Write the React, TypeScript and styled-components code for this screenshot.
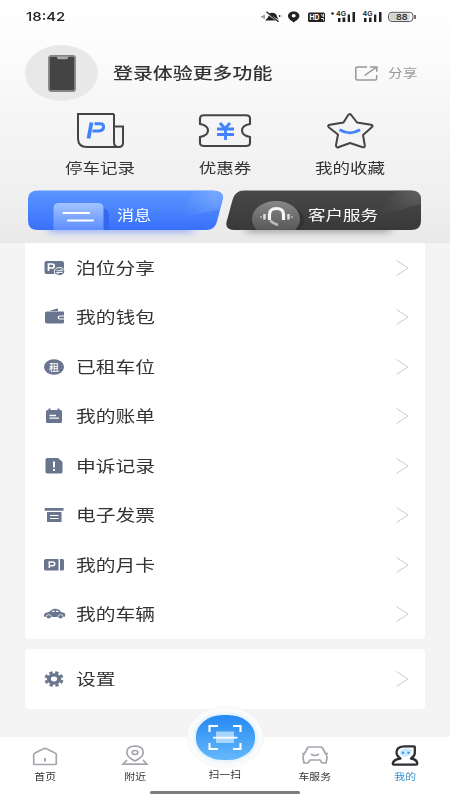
import React from "react";
import styled, { createGlobalStyle } from "styled-components";

const GlobalStyle = createGlobalStyle`
  * { box-sizing: border-box; }
  body { margin: 0; background: #f4f4f4; font-family: "Noto Sans CJK SC", sans-serif; }
  svg { display: block; flex: none; overflow: visible; }
`;

const Screen = styled.div`
  width: 450px;
  height: 800px;
  display: flex;
  flex-direction: column;
  overflow: hidden;
  background: #f4f4f4;
`;

const Header = styled.header`
  height: 243px;
  flex: none;
  background: linear-gradient(180deg, #ffffff 0%, #fcfcfc 20%, #f5f5f5 50%, #f0f0f0 80%, #e9e9e9 100%);
`;

/* Wide lettering: glyphs are stretched horizontally from the given side. */
const Label = styled.span<{ $size: number; $wide?: number; $color?: string; $from?: string; $weight?: number }>`
  display: inline-block;
  white-space: nowrap;
  line-height: 1;
  font-size: ${(p) => p.$size}px;
  font-weight: ${(p) => p.$weight ?? 400};
  color: ${(p) => p.$color ?? "#333"};
  transform: scaleX(${(p) => p.$wide ?? 1.26});
  transform-origin: ${(p) => p.$from ?? "left"} center;
`;

const StatusBar = styled.div`
  height: 34px;
  padding: 0 34px 0 26px;
  display: flex;
  align-items: center;
  justify-content: space-between;
`;

const Clock = styled(Label)`
  font-family: Inter, sans-serif;
  padding-top: 1px;
`;

const Profile = styled.div`
  height: 79px;
  padding: 0 33px 1px 25px;
  display: flex;
  align-items: center;
`;

const Avatar = styled.div`
  width: 73px;
  height: 56px;
  border-radius: 50%;
  background: #e8e8e8;
  display: flex;
  align-items: center;
  justify-content: center;
  margin-right: 15px;
`;

const Share = styled.div`
  margin-left: auto;
  display: flex;
  align-items: center;
  gap: 10px;
  width: 62px;
`;

const Shortcuts = styled.div`
  height: 77px;
  padding: 0 37px;
  display: grid;
  grid-template-columns: repeat(3, 125px);
`;

const Shortcut = styled.div`
  display: flex;
  flex-direction: column;
  align-items: center;
  gap: 12px;
`;

const Banners = styled.div`
  display: flex;
  gap: 3px;
  padding: 0 28px;
`;

const Banner = styled.div<{ $dark?: boolean }>`
  position: relative;
  width: 195px;
  height: 40px;
  display: flex;
  align-items: center;
  padding: 7px 0 0 ${(p) => (p.$dark ? 82 : 88.5)}px;
`;

const BannerArt = styled.svg`
  position: absolute;
  inset: 0;
`;

const BannerLabel = styled(Label)`
  position: relative;
`;

const Card = styled.section<{ $gap?: number }>`
  width: 400px;
  margin: ${(p) => p.$gap ?? 0}px auto 0;
  background: #fff;
  border-radius: ${(p) => (p.$gap ? "4px" : "0 0 4px 4px")};
`;

const Row = styled.div<{ $height: number }>`
  height: ${(p) => p.$height}px;
  padding: 0 16px 0 18.700px;
  display: flex;
  align-items: center;
`;

const RowIcon = styled.div`
  width: 32.800px;
`;

const RowArrow = styled.svg`
  margin-left: auto;
`;

const TabBar = styled.nav`
  height: 63px;
  margin-top: auto;
  position: relative;
  background: #fff;
  display: grid;
  grid-template-columns: repeat(5, 90px);
`;

const Tab = styled.div`
  display: flex;
  flex-direction: column;
  align-items: center;
  padding-top: 7.500px;
  gap: 5.500px;
`;

const ScanTab = styled.div`
  display: flex;
  flex-direction: column;
  align-items: center;
  margin-top: -30px;
  gap: 2.500px;
`;

const ScanHalo = styled.div`
  width: 76px;
  height: 60px;
  border-radius: 50%;
  background: #fbfbfb;
  box-shadow: 0 0 2px #e6eaee;
  display: flex;
  align-items: center;
  justify-content: center;
`;

const ScanButton = styled.div`
  width: 59px;
  height: 45px;
  border-radius: 27px / 21px;
  background: linear-gradient(180deg, #2588f2, #65b9fb);
  box-shadow: 0 0 3px 2px #dff2fc;
  display: flex;
  align-items: center;
  justify-content: center;
`;

const HomeIndicator = styled.div`
  position: absolute;
  left: 150px;
  bottom: 6.5px;
  width: 150px;
  height: 3px;
  border-radius: 2px;
  background: #7d7d7d;
`;

const StatusIcons = () => (
  <svg width="155" height="14" viewBox="261 10 155 14" fill="#222">
    <path d="M266 19.500c2-1.200 2-2.500 2.700-4l7 5H265zM269 14c2-2.200 6-1.500 7.500 1 .8 1.500.8 3 2.300 4.800z" />
    <path d="M266.500 11.800L278.500 21.800" stroke="#222" strokeWidth="1.300" />
    <path d="M262 16v1.500M264 15v3.500M279.500 15v2M281 15.500v1" stroke="#222" strokeWidth=".9" />
    <path fillRule="evenodd" d="M293.700 11.500c-3.200 0-5.700 1.900-5.700 4.500 0 3 3.500 4.600 5.700 6.500 2.200-1.900 5.700-3.500 5.700-6.500 0-2.600-2.500-4.500-5.700-4.500zM293.700 14a2 1.700 0 1 1 0 3.400a2 1.700 0 0 1 0-3.400z" />
    <rect x="308" y="12.500" width="17" height="9.500" rx="1.500" />
    <text x="309.500" y="20" fontFamily="Inter" fontSize="7.500" fontWeight="700" fill="#fff" textLength="10" lengthAdjust="spacingAndGlyphs">HD</text>
    <path d="M321.500 14l1 2.500M323.500 14v3M321 18.500h2.500v2" stroke="#fff" fill="none" strokeWidth=".9" />
    <circle cx="332.500" cy="13.500" r="1.300" />
    <text x="336" y="16.200" fontFamily="Inter" fontSize="6.800" fontWeight="600" textLength="10" lengthAdjust="spacingAndGlyphs">4G</text>
    <path d="M338 18h2.500v4H338zM342.500 17.500h2.800v4.500h-2.800zM347.700 14.500h2.300V22h-2.300zM352.500 12h2.500v10h-2.500z" />
    <text x="362.500" y="16.200" fontFamily="Inter" fontSize="6.800" fontWeight="600" textLength="10" lengthAdjust="spacingAndGlyphs">4G</text>
    <path d="M364 18h2.500v4H364zM369 17.500h2.500v4.500H369zM374 14.500h2.300V22H374zM379 12h2.500v10H379z" />
    <rect x="388.500" y="12.300" width="24.500" height="9.200" rx="3.500" fill="#fff" stroke="#555" />
    <path d="M392 13.300h17.500v7.200H392q-2.500 0-2.500-3.600t2.500-3.600z" fill="#d3d3d3" />
    <path d="M415 15v4" stroke="#444" strokeWidth="1.500" />
    <text x="396" y="19.900" fontFamily="Inter" fontSize="8" fontWeight="500" textLength="11.500" lengthAdjust="spacingAndGlyphs">88</text>
  </svg>
);

const PhoneIcon = () => (
  <svg width="28" height="37" viewBox="0 0 28 37">
    <rect x="1" y="1" width="26" height="35" rx="2" fill="#444" stroke="#858585" strokeWidth="1.800" />
    <path d="M9 1.500h11v1.300q0 1.500-2 1.500h-7q-2 0-2-1.500z" fill="#aaa" />
  </svg>
);

const ShareIcon = () => (
  <svg width="23" height="15" viewBox="0 0 23 15" fill="none" stroke="#999" strokeWidth="1.500">
    <path d="M12 1H2.500Q.8 1 .8 2.500v10Q.8 14 2.500 14h17.500q1.700 0 1.700-1.500V9" />
    <path d="M9.500 9.500L21.500 1.200M15 1h6.800v4.800" />
  </svg>
);

const ParkingRecordIcon = () => (
  <svg width="48" height="35" viewBox="0 0 48 35" fill="none" stroke="#444" strokeWidth="2">
    <path d="M38 1H2v24.500Q2 34 11 34h32M38 1v28q0 5 4.500 5t4.500-4V13.500h-8.500" />
    <path d="M15.500 9.500L12.500 25.500" stroke="#4283fb" strokeWidth="3.800" />
    <path d="M18.500 10.800h5.500q4 0 3.600 3.400T23 18h-6.500" stroke="#4283fb" strokeWidth="3" />
  </svg>
);

const CouponIcon = () => (
  <svg width="52" height="35" viewBox="0 0 52 35" fill="none" stroke="#444" strokeWidth="2.100">
    <path d="M5 2.200h42q4 0 4 3.300v5.500q-8 1.500-8 6.500t8 6.500v6q0 3-4 3H5q-4 0-4-3v-6q8-1.500 8-6.500T1 11V5.500q0-3.300 4-3.300z" />
    <path d="M21 10l5 5.500 5-5.500M18 16h17M18 21.500h17M26.500 15v12" stroke="#4283fb" strokeWidth="2.900" />
  </svg>
);

const StarIcon = () => (
  <svg width="48" height="35" viewBox="0 0 48 35" fill="none" strokeLinejoin="round">
    <path d="M24 .9Q22.500.9 21.500 3L17.500 9.500 4 11.800Q.8 12.400 3 14.500l9 7-2 10.500Q10 35.500 13 34L24 30l12 4q3 1.200 2.800-1.500L37 22l8.500-7.500q2.500-2-.5-2.700L31 9.500l-5-6.500Q25 .9 24 .9z" stroke="#444" strokeWidth="2" />
    <path d="M13.500 16.800q10.500 6 20.500 0" stroke="#4283fb" strokeWidth="2.800" />
  </svg>
);

const MessageArt = () => (
  <BannerArt width="195" height="40" viewBox="0 0 195 40">
    <defs>
      <linearGradient id="blueFill" x2="0" y2="1"><stop stopColor="#5a96ff" /><stop offset="1" stopColor="#3970fa" /></linearGradient>
      <radialGradient id="blueShine" gradientUnits="userSpaceOnUse" cx="187" cy="5" r="38"><stop stopColor="#8fbaff" stopOpacity=".55" /><stop offset="1" stopColor="#72a5ff" stopOpacity="0" /></radialGradient>
      <linearGradient id="noteFill" x2="0" y2="1"><stop stopColor="#a3c4ff" /><stop offset="1" stopColor="#5d8efd" /></linearGradient>
      <filter id="soft" x="-20%" y="-150%" width="140%" height="400%"><feGaussianBlur stdDeviation="5 3" /></filter>
    </defs>
    <rect x="20" y="34" width="145" height="9" fill="#a0b8f6" filter="url(#soft)" />
    <path d="M10 .5h174q12 0 11 8l-6 23q-2 8.500-11 8.500H10Q0 40 0 31V9Q0 .5 10 .5z" fill="url(#blueFill)" />
    <path d="M184 .5q12 0 11 8l-3 11L150 28 165 .5z" fill="url(#blueShine)" />
    <path d="M74 18q7 1 7 7v15h-7z" fill="#3469ef" />
    <path d="M25.500 40V18q0-5 6-5h38q6 0 6 5v22z" fill="url(#noteFill)" />
    <path d="M35.500 23H61M40 30.500h25" stroke="#fff" strokeWidth="2.200" strokeLinecap="round" />
  </BannerArt>
);

const ServiceArt = () => (
  <BannerArt width="195" height="40" viewBox="0 0 195 40">
    <defs>
      <linearGradient id="darkFill" x2="0" y2="1"><stop stopColor="#484848" /><stop offset="1" stopColor="#393939" /></linearGradient>
      <radialGradient id="darkShine" gradientUnits="userSpaceOnUse" cx="190" cy="4" r="42"><stop stopColor="#777" stopOpacity=".5" /><stop offset="1" stopColor="#555" stopOpacity="0" /></radialGradient>
      <linearGradient id="discFill" x2="0" y2="1"><stop stopColor="#888" /><stop offset="1" stopColor="#4c4c4c" /></linearGradient>
      <clipPath id="darkClip"><rect width="195" height="40" /></clipPath>
    </defs>
    <rect x="20" y="34" width="145" height="9" fill="#aaa" filter="url(#soft)" />
    <path d="M18 .5h167q10 0 10 9V31q0 9-10 9H9Q-1 40 .5 32l6-22Q9 .5 18 .5z" fill="url(#darkFill)" />
    <path d="M185 .5q10 0 10 9V14l-45 12L170 .5z" fill="url(#darkShine)" />
    <g clipPath="url(#darkClip)">
      <ellipse cx="55" cy="31" rx="23" ry="17" fill="#333" />
      <ellipse cx="50" cy="29" rx="24" ry="18" fill="url(#discFill)" />
      <path d="M43.500 30v-5.500q0-6 7-6t7 6V30" fill="none" stroke="#f5f5f5" strokeWidth="3.200" />
      <path d="M44 30.500q3 3 8 4.500" fill="none" stroke="#bbb" strokeWidth="2.500" />
      <path d="M38.500 24v5.500M62.500 24v5.500" stroke="#ddd" strokeWidth="2.600" />
      <path d="M35 26v2M66 26v2" stroke="#bbb" strokeWidth="1.500" />
    </g>
  </BannerArt>
);

const ink = "#69758e";
const glyphs: Record<string, React.ReactNode> = {
  berth: (
    <>
      <path d="M2.500 3h15Q20 3 20 5v11H2.500Q.5 16 .5 14V5q0-2 2-2z" fill={ink} />
      <path d="M4.500 13V6h3.300q2.400 0 2.400 2t-2.400 2H5" fill="none" stroke="#fff" strokeWidth="1.700" />
      <ellipse cx="15.500" cy="13.500" rx="5.200" ry="4" fill={ink} stroke="#fff" />
      <path d="M12.500 12.700h6l-2-1.500M18.500 14.500h-6l2 1.500" fill="none" stroke="#fff" strokeWidth=".9" />
    </>
  ),
  wallet: (
    <>
      <path d="M5.500 4l7.500-2.500q1-.3 1 1V4z" fill={ink} />
      <path d="M3 4.500h16.500q.5 0 .5 1v3h-4q-2.500 0-2.500 2t2.500 2h4V15q0 1.500-1.500 1.500H3q-2 0-2-1.700V6q0-1.500 2-1.500z" fill={ink} />
      <path d="M16 9.500h4v2h-4q-1 0-1-1t1-1z" fill={ink} />
    </>
  ),
  rented: (
    <>
      <ellipse cx="10" cy="10" rx="10" ry="7.800" fill={ink} />
      <text x="5" y="13.500" fontSize="9.500" fontWeight="500" fill="#fff" textLength="10" lengthAdjust="spacingAndGlyphs">租</text>
    </>
  ),
  bill: (
    <>
      <path d="M3.500 4h1V2.500h2V4h7V2.500h2V4h1Q18 4 18 5.500v10q0 1.500-1.500 1.500h-13Q2 17 2 15.500v-10Q2 4 3.500 4z" fill={ink} />
      <path d="M5.500 9.500H12M5.500 12.200h9.500" stroke="#fff" strokeWidth="1.300" />
    </>
  ),
  appeal: (
    <>
      <path d="M3.500 2H14l4.500 4v10q0 1.500-2 1.500h-13q-2 0-2-1.500V3.500Q1.500 2 3.500 2z" fill={ink} />
      <path d="M10 5.500v6M10 13v1.900" stroke="#fff" strokeWidth="2" />
    </>
  ),
  invoice: (
    <>
      <path d="M.7 3h18.800v2.700H.7zM3 7h14.500v10H3z" fill={ink} />
      <path d="M6 10.500h8.500M6 13.500h8.500" stroke="#fff" strokeWidth="1.200" />
    </>
  ),
  monthly: (
    <>
      <path d="M2 4h12.500v11.500H2q-2 0-2-1.500V5.500Q0 4 2 4zM16 4h2.500Q20 4 20 5.500V14q0 1.500-1.500 1.500H16z" fill={ink} />
      <path d="M5.300 13V7H8.500q2.300 0 2.300 1.800T8.500 10.700H6" fill="none" stroke="#fff" strokeWidth="1.500" />
    </>
  ),
  car: (
    <>
      <path d="M1 9l4-1 2.500-2Q9 4.700 11 4.700q4 0 6 3.300l3.500 1q1 .5.700 2.500l-.7 1.500H2q-2.500 0-2-2z" fill={ink} />
      <path d="M7.500 8l2-1.500h1V8zM12 6.500q2.200 0 3 1.500H12z" fill="#fff" />
      <ellipse cx="4.800" cy="12.700" rx="2.700" ry="2" fill={ink} stroke="#fff" strokeWidth=".7" />
      <ellipse cx="16.500" cy="12.700" rx="2.700" ry="2" fill={ink} stroke="#fff" strokeWidth=".7" />
    </>
  ),
  settings: (
    <>
      <ellipse cx="10" cy="10" rx="7.200" ry="5.700" fill={ink} />
      <ellipse cx="10" cy="10" rx="8.300" ry="6.600" fill="none" stroke={ink} strokeWidth="2.600" pathLength="80" strokeDasharray="5.600 4.400" strokeDashoffset="-2" />
      <ellipse cx="10" cy="10" rx="3.100" ry="2.400" fill="#fff" />
    </>
  ),
};

const MenuRow = ({ icon, text, height = 49.5 }: { icon: string; text: string; height?: number }) => (
  <Row $height={height}>
    <RowIcon>
      <svg width="21" height="20" viewBox="0 0 21 20">{glyphs[icon]}</svg>
    </RowIcon>
    <Label $size={15.7}>{text}</Label>
    <RowArrow width="13" height="18" viewBox="0 0 13 18">
      <path d="M.5 1.500L12 9 .5 16.500" fill="none" stroke="#ccc" strokeWidth="1" />
    </RowArrow>
  </Row>
);

const HomeIcon = () => (
  <svg width="26" height="22" viewBox="0 0 26 22" fill="none" stroke="#a4a6ae" strokeWidth="1.700">
    <path d="M1.700 9.500Q1.700 8.500 3 8L11.500 3.700q1.500-.7 3 0L23 8q1.300.5 1.300 1.500v9.200q0 .8-1.300.8H3q-1.300 0-1.300-.8z" />
    <path d="M13 13v3.500" strokeWidth="1.900" />
  </svg>
);

const NearbyIcon = () => (
  <svg width="26" height="22" viewBox="0 0 26 22" fill="none" stroke="#a4a6ae" strokeWidth="1.700">
    <path d="M13 16Q4.800 12 4.800 7.500 4.800 1.200 13 1.200t8.200 6.300q0 4.500-8.200 8.500z" />
    <ellipse cx="13" cy="7.500" rx="2.800" ry="2" />
    <path d="M5 15L1 19.200h24L21 15" />
  </svg>
);

const CarServiceIcon = () => (
  <svg width="26" height="22" viewBox="0 0 26 22" fill="none" stroke="#a4a6ae" strokeWidth="1.700" strokeLinejoin="round">
    <path d="M7 2h12q1 0 1.500 1l3 5.500q1.500 1.500 1.500 4.500l-1 5h-4L18 15H8l-2 3H2l-1-5q0-3 1.500-4.500l3-5.500q.5-1 1.500-1zM0 8.500h3M23 8.500h3" />
    <path d="M9 9q4 3 8 0" />
  </svg>
);

const MineIcon = () => (
  <svg width="28" height="22" viewBox="0 0 28 22" fill="none">
    <path d="M9.500 13.500Q5.500 11 5.500 7.300 5.500 1.300 14 1.300h9q1 0 .8 1.500V8q0 3-3.800 5.500 6 1 6.300 5 0 1.200-1.300 1.200H3q-1.300 0-1.300-1.200Q2.500 14.500 9.500 13.500z" fill="#fff" stroke="#2d2f34" strokeWidth="2.300" strokeLinejoin="round" />
    <path d="M9 6q2-3 8-2.500l4 1-1 4q-2 3-6 3.500-4-.5-5-3z" fill="#cae9ff" />
    <path d="M12 6.700v2M17.500 6.700v2" stroke="#3c91d5" strokeWidth="2.200" />
  </svg>
);

const ScanIcon = () => (
  <svg width="34" height="27" viewBox="0 0 34 27" fill="none">
    <path d="M8 7.500h18v11.500H8z" fill="#d3ecff" opacity=".7" />
    <path d="M1.500 8V2h8.500M25 2h7.500v6M1.500 19v6H10M25 25h7.500v-6" stroke="#fff" strokeWidth="2.100" />
    <path d="M5 13.700h24.500" stroke="#fff" strokeWidth="1.800" />
  </svg>
);

const menu = [
  ["berth", "泊位分享"],
  ["wallet", "我的钱包"],
  ["rented", "已租车位"],
  ["bill", "我的账单"],
  ["appeal", "申诉记录"],
  ["invoice", "电子发票"],
  ["monthly", "我的月卡"],
  ["car", "我的车辆"],
];

const shortcuts = [
  { text: "停车记录", icon: <ParkingRecordIcon /> },
  { text: "优惠券", icon: <CouponIcon /> },
  { text: "我的收藏", icon: <StarIcon /> },
];

const TabItem = ({ icon, text, color }: { icon: React.ReactNode; text: string; color?: string }) => (
  <Tab>
    {icon}
    <Label $size={9.2} $wide={1.18} $from="center" $color={color}>{text}</Label>
  </Tab>
);

export default function App() {
  return (
    <Screen>
      <GlobalStyle />
      <Header>
        <StatusBar>
          <Clock $size={12.2} $wide={1.23} $weight={500} $color="#222">18:42</Clock>
          <StatusIcons />
        </StatusBar>
        <Profile>
          <Avatar><PhoneIcon /></Avatar>
          <Label $size={15.5} $wide={1.285} $weight={500}>登录体验更多功能</Label>
          <Share>
            <ShareIcon />
            <Label $size={12} $wide={1.23} $color="#999">分享</Label>
          </Share>
        </Profile>
        <Shortcuts>
          {shortcuts.map((s) => (
            <Shortcut key={s.text}>
              {s.icon}
              <Label $size={14} $wide={1.25} $from="center">{s.text}</Label>
            </Shortcut>
          ))}
        </Shortcuts>
        <Banners>
          <Banner>
            <MessageArt />
            <BannerLabel $size={14} $wide={1.22} $color="#fff">消息</BannerLabel>
          </Banner>
          <Banner $dark>
            <ServiceArt />
            <BannerLabel $size={14} $wide={1.25} $color="#fff">客户服务</BannerLabel>
          </Banner>
        </Banners>
      </Header>
      <Card>
        {menu.map(([icon, text]) => <MenuRow key={icon} icon={icon} text={text} />)}
      </Card>
      <Card $gap={10}>
        <MenuRow icon="settings" text="设置" height={60} />
      </Card>
      <TabBar>
        <TabItem icon={<HomeIcon />} text="首页" />
        <TabItem icon={<NearbyIcon />} text="附近" />
        <ScanTab>
          <ScanHalo><ScanButton><ScanIcon /></ScanButton></ScanHalo>
          <Label $size={9.2} $wide={1.18} $from="center">扫一扫</Label>
        </ScanTab>
        <TabItem icon={<CarServiceIcon />} text="车服务" />
        <TabItem icon={<MineIcon />} text="我的" color="#358fca" />
        <HomeIndicator />
      </TabBar>
    </Screen>
  );
}
